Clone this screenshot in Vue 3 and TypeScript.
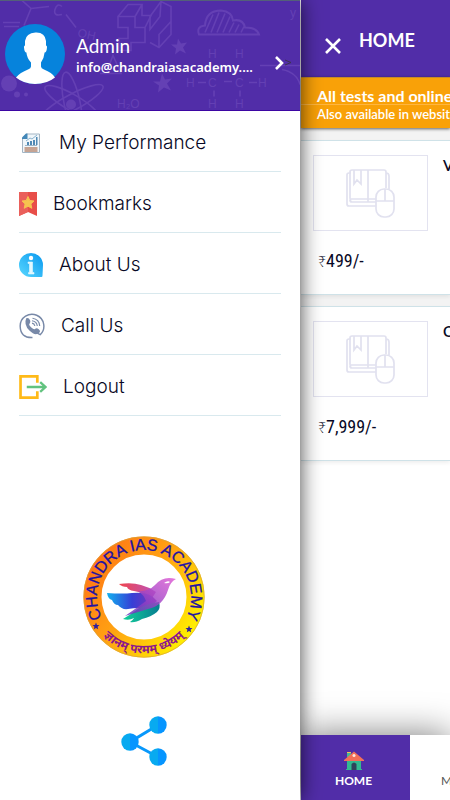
<script setup lang="ts">
interface MenuEntry {
  id: string
  label: string
}

interface Course {
  id: number
  initial: string
  price: string
}

const menu: MenuEntry[] = [
  { id: 'performance', label: 'My Performance' },
  { id: 'bookmarks', label: 'Bookmarks' },
  { id: 'about', label: 'About Us' },
  { id: 'call', label: 'Call Us' },
  { id: 'logout', label: 'Logout' },
]

const courses: Course[] = [
  { id: 1, initial: 'V', price: '499/-' },
  { id: 2, initial: 'C', price: '7,999/-' },
]
</script>

<template>
  <div class="shell">
    <aside class="drawer">
      <header class="profile">
        <svg class="doodles" viewBox="0 0 300 110" preserveAspectRatio="xMidYMid slice" fill="none" stroke="#6440b4" stroke-width="1.600" aria-hidden="true">
          <path d="M22 0 31 8 24 25M31 8 49 6M3 22h17M4 26h15M66 14l10 13M62 6q-5-4-7 3t7 5" />
          <path d="M118 16v11h10v11h-9v12h12v-8h14V27h-10V16zM118 16l10-12h14l-7 12M142 4v11h9l-6 12M119 50l-3-7" />
          <path d="M150 16l11-15 10 5v28l-12 13-9-5M150 16v13l10-13 1-15M159 47V34l12-13" />
          <g font-family="Liberation Sans" font-size="12" fill="#6440b4" stroke="none">
            <text x="77" y="36" transform="rotate(12 77 36)">OH</text>
            <text x="208" y="57">H</text><text x="235" y="57">H</text>
            <text x="186" y="86">H</text><text x="208" y="86">C</text><text x="235" y="86">C</text><text x="258" y="86">H</text>
            <text x="208" y="107">H</text><text x="235" y="107">H</text><text x="290" y="16">y</text>
            <text x="117" y="107">H₂O</text>
          </g>
          <path d="M198 82h8M224 81h8M249 82h8M214 90v6M240 90v6M260 65h40M282 69q15 3 18 15" />
          <path d="M199 34q-3-8 6-9 1-15 16-15 11 1 12 10 10-2 12 7 12 0 14 7z" stroke-width="2" />
          <path d="M205 32l8-18M211 32l8-20M217 32l8-19M223 32l7-16M229 32l5-10M235 32l4-8M241 32l3-6" />
          <g fill="#6440b4" stroke="none">
            <path d="M178 38l3 5 6-1-4 5 3 6-6-3-5 4 1-6-5-4h6z" />
            <path d="M162 73l3 6 7-1-5 5 4 7-7-3-6 5 1-7-6-4h7z" />
            <circle cx="9" cy="83" r="8" /><circle cx="17" cy="94" r="3" /><circle cx="26" cy="94" r="2" />
            <circle cx="71" cy="104" r="5" />
          </g>
          <ellipse cx="72" cy="102" rx="8" ry="31" transform="rotate(-12 72 102)" />
          <ellipse cx="72" cy="102" rx="8" ry="35" transform="rotate(62 72 102)" />
          <ellipse cx="72" cy="102" rx="8" ry="31" transform="rotate(-60 72 102)" />
          <path d="M113 55l-7 18h15zM100 73h9" />
        </svg>
        <svg class="avatar" viewBox="0 0 60 60" role="img" aria-label="Profile photo">
          <circle cx="30" cy="30" r="30" fill="#0683dc" />
          <path d="M11 53.500q4-5 12-8 3-1 3-3v-4q-4-4-4.600-10-2 0-2.400-5-.2-2 1-2V17q1-8 10.500-8.500Q40 8 41 17v4.500q1.200 0 1 2-.4 5-2.400 5-.6 6-3.600 10v4q0 2 3 3 8 3 11 8Q42 60 30 60q-11 0-19-6.500z" fill="#fff" />
        </svg>
        <div class="identity">
          <strong class="name">Admin</strong>
          <span class="mail">info@chandraiasacademy....</span>
        </div>
        <button class="open" type="button" aria-label="Open profile">
          <svg width="20" height="16" viewBox="0 0 20 16" fill="none">
            <path d="M4 2l6 6-6 6" stroke="#fff" stroke-width="2.600" />
            <path d="M13 5l6 2.500-6 2.500" stroke="#3e344f" />
          </svg>
        </button>
      </header>

      <nav class="menu" aria-label="Account">
        <a v-for="entry in menu" :key="entry.id" class="entry" href="#">
          <svg v-if="entry.id === 'performance'" width="24" height="22" viewBox="0 0 24 22" aria-hidden="true">
            <path d="M7.500 2H20.500V20.500H3.500V6z" fill="#f0f6fa" stroke="#a3b5c4" />
            <path d="M3 7V5.500L7 1.500h1.500V7z" fill="#4388b8" />
            <path d="M8 13v-3h2v3zM11 13V9h2v4zM14 13V8h2v5zM17 13V5h1.500v8z" fill="#4f89b5" />
            <path d="M7 9l4-3 2 1 5-4" fill="none" stroke="#8ab3cf" />
            <path d="M6 13.500h12" stroke="#9db4c5" />
            <path d="M5.500 15h13v5h-13z" fill="#c5a494" />
          </svg>
          <svg v-else-if="entry.id === 'bookmarks'" width="18" height="24" viewBox="0 0 18 24" aria-hidden="true">
            <path d="M0 0h18v24l-9-4-9 4z" fill="#e84e49" />
            <path d="M0 0h9v20L0 24z" fill="#ea605b" />
            <path d="M9 4.500l1.800 4 4.200.5-3.100 2.900.9 4.400L9 14.200l-3.800 2.100.9-4.400L3 9l4.200-.5z" fill="#f6c34f" stroke="#f6c34f" />
          </svg>
          <svg v-else-if="entry.id === 'about'" width="24" height="24" viewBox="0 0 24 24" aria-hidden="true">
            <defs>
              <linearGradient id="infoFill" x1="0" y1="1" x2="1" y2="0">
                <stop offset="0" stop-color="#5ad8ff" /><stop offset="1" stop-color="#0998ef" />
              </linearGradient>
            </defs>
            <path d="M12 0a12 12 0 1 0 0 24h10.500q1 0 1-1.500L24 12A12 12 0 0 0 12 0z" fill="url(#infoFill)" />
            <circle cx="12" cy="5" r="2.200" fill="#fff" />
            <path d="M9 9h4.500v10.500H15V21H9.500v-1.500h1v-9H9z" fill="#e3f8ff" stroke="#e3f8ff" stroke-width=".6" />
          </svg>
          <svg v-else-if="entry.id === 'call'" width="26" height="26" viewBox="0 0 27 27" fill="none" stroke="#7889a8" aria-hidden="true">
            <path d="M14 25.500Q1.500 26 1.200 13.500A12.300 12.300 0 1 1 22 22.500L19 21" stroke-width="1.500" />
            <path d="M7.500 5.500q2.500-1 4 2 1 2.300-.7 3.800-1 1 2 3.700 2.700 2.500 3.800 1.500 1.700-1.500 3.900.3 2.300 2 .5 3.700-4 3.800-10.200-2.300T7.500 5.500z" fill="#7889a8" stroke="none" />
            <path d="M14 5.500q7 1 7.500 8M13.500 8q5 .7 5.500 5.500M13.500 10.500q2.500.5 3 3" stroke-width="1.200" />
          </svg>
          <svg v-else width="28" height="24" viewBox="0 0 29 25" fill="none" aria-hidden="true">
            <path d="M19 8V1.500H1.500v22H19V17" stroke="#ffba18" stroke-width="2.800" />
            <path d="M8 12.500h19M22 7.500l5.500 5-5.500 5" stroke="#62c37f" stroke-width="2.400" />
          </svg>
          <span>{{ entry.label }}</span>
        </a>
      </nav>

      <div class="brand">
        <svg width="122" height="122" viewBox="0 0 122 122" role="img" aria-label="Chandra IAS Academy">
          <defs>
            <linearGradient id="ringFill" x1="0" y1=".1" x2="1" y2=".8">
              <stop offset="0" stop-color="#ff7416" /><stop offset=".5" stop-color="#ffa512" /><stop offset="1" stop-color="#fff000" />
            </linearGradient>
            <linearGradient id="redWing"><stop offset="0" stop-color="#f0464d" /><stop offset="1" stop-color="#bb52bd" /></linearGradient>
            <linearGradient id="blueWing"><stop offset="0" stop-color="#12b0ef" /><stop offset=".5" stop-color="#363fd6" /><stop offset="1" stop-color="#8531b5" /></linearGradient>
            <linearGradient id="greenWing"><stop offset="0" stop-color="#12d09a" /><stop offset="1" stop-color="#087d91" /></linearGradient>
            <linearGradient id="birdBody" x1="0" y1="1" x2="1" y2="0"><stop offset="0" stop-color="#6030ba" /><stop offset="1" stop-color="#e05bd3" /></linearGradient>
            <path id="upperArc" d="M22.500 88A47 47 0 1 1 99.500 88" />
            <path id="lowerArc" d="M9 83A56.500 56.500 0 0 0 113 83" />
            <path id="star" d="M0-3.500l1 2.400 2.500.2-1.900 1.700.6 2.500L0 2l-2.200 1.300.6-2.500-1.900-1.700 2.500-.2z" fill="#31209c" />
          </defs>
          <circle cx="61" cy="61" r="51.500" fill="#fff" stroke="url(#ringFill)" stroke-width="18" />
          <circle cx="61" cy="61" r="60.300" fill="none" stroke="#d9a53b" stroke-width=".7" />
          <text class="ring-name"><textPath href="#upperArc" startOffset="50%" text-anchor="middle">CHANDRA IAS ACADEMY</textPath></text>
          <text class="ring-motto"><textPath href="#lowerArc" startOffset="50%" text-anchor="middle">ज्ञानम् परमम् ध्येयम्</textPath></text>
          <use href="#star" x="13" y="90" />
          <use href="#star" x="106" y="93" />
          <path d="M36 48q13-2 22 1 8 2 15 7l-6 9q-7-9-16-10-6-1-7-4-5 0-8-3z" fill="url(#redWing)" />
          <path d="M24 57q16 1 25 0 18-2 25 8l-9 8q-9-2-20 0-6 1-10-4-4 0-6-5-4-1-5-7z" fill="url(#blueWing)" />
          <path d="M40 83q10-6 16-11 10-5 20-6 2 6-2 10-6 5-15 7-7 4-12 3 3-2 4-4-5 3-11 1z" fill="url(#greenWing)" />
          <path d="M55 55q10 1 17-6 6-7 14-7 3 0 7 1-6 3-8 11-5 16-20 19l-23 7q13-9 21-15-2-6-8-10z" fill="url(#birdBody)" opacity=".83" />
          <path d="M81 47q4-3 6-1-2 2-6 1z" fill="#fff" />
        </svg>
      </div>

      <button class="share" type="button" aria-label="Share">
        <svg width="46" height="50" viewBox="0 0 46 50" aria-hidden="true">
          <defs>
            <linearGradient id="nodeFill"><stop offset=".5" stop-color="#08aaf0" /><stop offset=".5" stop-color="#0695ff" /></linearGradient>
          </defs>
          <path d="M37 9L9 26l28 15" fill="none" stroke="#0898fb" stroke-width="3" />
          <circle cx="37" cy="9" r="8.700" fill="url(#nodeFill)" />
          <circle cx="9" cy="26" r="8.700" fill="url(#nodeFill)" />
          <circle cx="37" cy="41" r="8.700" fill="url(#nodeFill)" />
        </svg>
      </button>
    </aside>

    <main class="page">
      <header class="topbar">
        <button class="close" type="button" aria-label="Close menu">
          <svg width="18" height="18" viewBox="0 0 18 18" stroke="#fff" stroke-width="2.600"><path d="M2 2l14 14M16 2L2 16" /></svg>
        </button>
        <h1>HOME</h1>
      </header>
      <section class="banner">
        <strong>All tests and online</strong>
        <span>Also available in website</span>
      </section>
      <section class="courses">
        <article v-for="course in courses" :key="course.id" class="course">
          <div class="cover">
            <svg width="50" height="50" viewBox="0 0 50 50" fill="none" stroke="#e1e1ef" stroke-width="1.700" aria-hidden="true">
              <path d="M5 5H3q-2 0-2 2v29q0 2 2 2h27M5 33q-1-1-1-3V4q0-2 2-2h32q2 0 2 2v16M40 5q3 0 3 3v13M4 32q0 2 2 2h24M5 31h25M22 2v32M8 2v14l3-4 4 4V2" />
              <rect x="30" y="21" width="18" height="28" rx="8" /><path d="M30 33h18M39 21v12" />
            </svg>
          </div>
          <h2>{{ course.initial }}</h2>
          <p class="price"><span class="rupee">₹</span>{{ course.price }}</p>
        </article>
      </section>
      <nav class="tabs" aria-label="Main">
        <a class="tab active" href="#">
          <svg width="20" height="20" viewBox="0 0 20 20" aria-hidden="true">
            <path d="M3 9h14v9h1v1H2v-1h1z" fill="#33b990" />
            <path d="M3 1h4v5H3z" fill="#42b995" /><path d="M3 1h4v1H3z" fill="#f4c052" />
            <path d="M10 .5L20 9v1H0V9z" fill="#f36f58" />
            <circle cx="10" cy="4.500" r="1.500" fill="#ffe7dd" />
            <path d="M7.500 19v-6q2.500-3 5 0v6z" fill="#30445c" />
          </svg>
          <span>HOME</span>
        </a>
        <a class="tab" href="#"><span>My Courses</span></a>
      </nav>
    </main>
  </div>
</template>

<style>
body {
  margin: 0;
  background: #fff;
}
</style>

<style scoped>
.shell {
  display: flex;
  min-height: 100vh;
  overflow: hidden;
  font-family: Lato, "Noto Sans", sans-serif;
  color: #080825;
}

.shell * {
  box-sizing: border-box;
}

button {
  padding: 0;
  border: 0;
  background: none;
}

a {
  color: inherit;
  text-decoration: none;
}

svg {
  display: block;
  flex: none;
}

.drawer {
  position: relative;
  z-index: 1;
  display: flex;
  flex: 0 0 300px;
  flex-direction: column;
  background: #fff;
  box-shadow: 0 0 20px #000b;
}

.profile {
  position: relative;
  display: flex;
  align-items: center;
  height: 111px;
  padding: 0 8px 4px 5px;
  color: #fff;
  background: #512da8;
  border-top: 1px solid #536079;
  border-bottom: 1px solid #3d06a3;
}

.doodles {
  position: absolute;
  inset: 0;
  width: 100%;
  height: 100%;
}

.avatar,
.identity,
.open {
  position: relative;
}

.avatar {
  width: 60px;
  height: 60px;
}

.identity {
  display: flex;
  flex: 1;
  flex-direction: column;
  min-width: 0;
  padding-top: 4px;
  padding-left: 11px;
}

.name {
  font-size: 19px;
  font-weight: 400;
  line-height: 22px;
}

.mail {
  font-family: "Noto Sans", sans-serif;
  font-size: 13px;
  font-weight: 600;
  line-height: 20px;
  white-space: nowrap;
}

.open {
  margin-top: 18px;
}

.menu {
  display: flex;
  flex-direction: column;
  padding: 0 19px;
}

.entry {
  display: flex;
  align-items: center;
  gap: 16px;
  height: 61px;
  padding-top: 3px;
  border-bottom: 1px solid #d9e9ee;
  font-family: Inter, sans-serif;
  font-size: 19px;
  font-weight: 300;
  line-height: 24px;
}

.brand {
  display: flex;
  justify-content: center;
  margin-top: auto;
  padding-right: 12px;
}

.ring-name {
  font: 16px "Liberation Sans", sans-serif;
  fill: #2112a5;
  stroke: #2112a5;
  stroke-width: 0.3px;
}

.ring-motto {
  font: 700 12px "Noto Sans", "Noto Sans Devanagari", sans-serif;
  fill: #8b168e;
}

.share {
  align-self: center;
  margin: 58px 12px 34px 0;
}

.page {
  display: flex;
  flex: 1;
  flex-direction: column;
  min-width: 0;
  padding-left: 1px;
  background: #fff;
}

.topbar {
  display: flex;
  align-items: center;
  gap: 17px;
  height: 77px;
  padding-left: 23px;
  color: #fff;
  background: #512da8;
}

.close {
  margin-top: 14px;
}

h1 {
  margin: 3px 0 0;
  font-size: 18px;
  font-weight: 700;
  line-height: 24px;
}

.banner {
  position: relative;
  display: flex;
  flex-direction: column;
  height: 51px;
  padding: 8px 0 0 16px;
  color: #fff;
  background: linear-gradient(#ffb640, #ffb640) 0 26px / 100% 1px no-repeat #f9a108;
  border-top: 1px solid #c78b28;
  box-shadow: 0 1px 3px #0009;
  white-space: nowrap;
}

.banner strong {
  font-size: 16px;
  line-height: 20px;
}

.banner span {
  font-size: 13px;
  font-weight: 600;
  line-height: 16px;
}

.courses {
  display: flex;
  flex-direction: column;
  gap: 11px;
  padding-top: 12px;
  background: #f3f3f3;
}

.course {
  display: grid;
  grid-template-columns: 115px 1fr;
  column-gap: 15px;
  align-content: start;
  height: 155px;
  padding: 14px 0 0 12px;
  background: #fff;
  border: solid #cfe2e8;
  border-width: 1px 0;
  box-shadow: 0 2px 4px #0001;
}

.cover {
  display: flex;
  align-items: center;
  justify-content: center;
  height: 76px;
  border: 1px solid #e3e3f0;
}

h2 {
  margin: 0;
  font-size: 15px;
  font-weight: 600;
  line-height: 20px;
}

.price {
  margin: 16px 0 0 5px;
  font-family: "Liberation Sans Narrow", "Roboto Condensed", Roboto, sans-serif;
  font-size: 18px;
  line-height: 28px;
  white-space: nowrap;
}

.rupee {
  font-family: "Noto Sans", sans-serif;
  font-size: 14px;
  font-weight: 300;
}

.tabs {
  display: flex;
  height: 65px;
  margin-top: auto;
  background: #fff;
  box-shadow: 0 0 36px #0008;
}

.tab {
  display: flex;
  flex: 0 0 109px;
  flex-direction: column;
  align-items: center;
  justify-content: flex-end;
  gap: 2px;
  padding-bottom: 11px;
  color: #555;
  font-size: 12px;
  line-height: 16px;
  white-space: nowrap;
}

.tab.active {
  padding-right: 4px;
  color: #fff;
  background: #512da8;
  font-weight: 700;
}

.tab:not(.active) {
  align-items: flex-start;
  padding-left: 31px;
}
</style>
